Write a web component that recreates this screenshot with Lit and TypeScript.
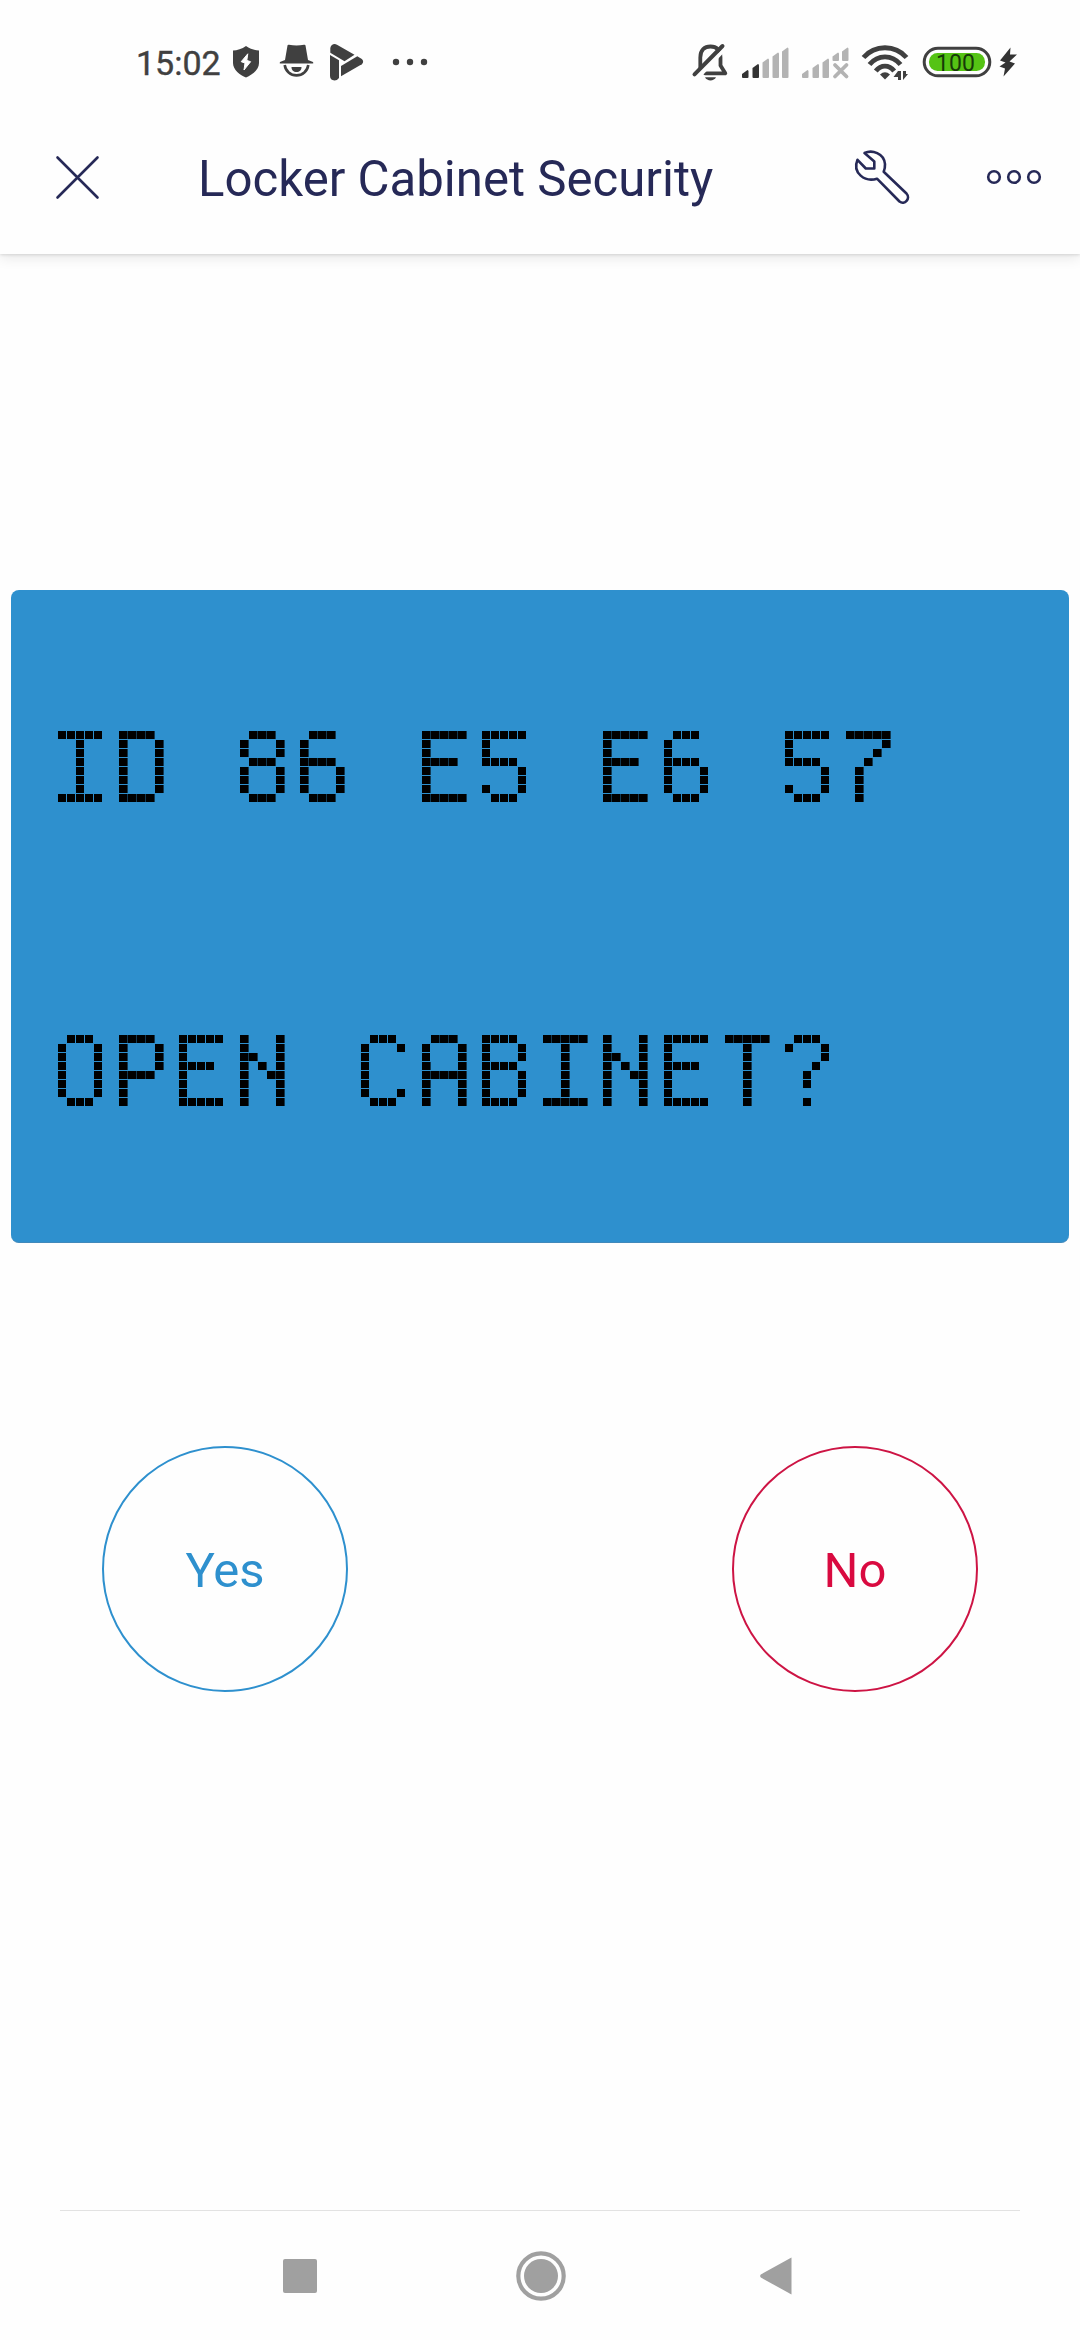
import { LitElement, html, svg, css } from "lit";
import { customElement, property } from "lit/decorators.js";

/**
 * How a character is fitted to the 5x8 dot cell: font, scale and baseline origin,
 * outline weight, and single dots [row, column] switched on or off afterwards.
 */
interface Fit {
  font: string;
  weight?: string;
  sx: number;
  sy: number;
  tx: number;
  ty: number;
  stroke?: number;
  on?: number[][];
  off?: number[][];
}

const DEJAVU = "DejaVu Sans Mono";
const LIBERATION = "Liberation Mono";

const FITS: Record<string, Fit> = {
  "5": { font: LIBERATION, sx: 0.979, sy: 1, tx: -6.9, ty: 69 },
  "6": { font: "Open Sans", sx: 0.979, sy: 1, tx: -7.9, ty: 72 },
  "7": { font: "Liberation Sans", sx: 1.348, sy: 0.971, tx: -18.7, ty: 67, off: [[4, 2]] },
  "8": { font: DEJAVU, sx: 0.979, sy: 0.934, tx: -6.9, ty: 69 },
  I: { font: DEJAVU, sx: 0.905, sy: 0.932, tx: -4.1, ty: 70, stroke: 3 },
  D: { font: DEJAVU, sx: 0.979, sy: 1.014, tx: -4.9, ty: 73 },
  E: { font: LIBERATION, sx: 0.917, sy: 1.03, tx: -6.4, ty: 69 },
  O: { font: DEJAVU, sx: 0.94, sy: 0.974, tx: -5.7, ty: 72 },
  P: { font: DEJAVU, sx: 0.936, sy: 1, tx: -6.4, ty: 74 },
  N: { font: "Roboto", sx: 0.909, sy: 1.028, tx: -9.3, ty: 69, off: [[1, 1], [5, 3]] },
  C: { font: LIBERATION, sx: 0.922, sy: 1.088, tx: -6.6, ty: 71.9 },
  A: {
    font: LIBERATION,
    weight: "bold",
    sx: 1.016,
    sy: 1.258,
    tx: -6,
    ty: 68,
    on: [[1, 0], [2, 0]],
    off: [[1, 1], [1, 3], [2, 1], [2, 3], [3, 1]],
  },
  B: { font: DEJAVU, sx: 0.917, sy: 0.932, tx: -4.3, ty: 70 },
  T: { font: DEJAVU, sx: 0.679, sy: 0.878, tx: 2.6, ty: 68, stroke: 3 },
  "?": { font: DEJAVU, sx: 1.1, sy: 0.959, tx: -10.1, ty: 73 },
};
const PLAIN: Fit = { font: DEJAVU, sx: 0.94, sy: 0.974, tx: -5.7, ty: 72 };

/** One line of the LCD. Each character is rasterised onto its dot cell by an SVG filter. */
@customElement("lcd-line")
export class LcdLine extends LitElement {
  @property() text = "";

  static styles = css`
    :host {
      display: block;
    }
    svg {
      display: block;
      overflow: visible;
    }
    text {
      font-size: 100px;
      fill: #000;
      stroke: #000;
      stroke-linejoin: round;
    }
    .on {
      fill: #000;
    }
    .off {
      fill: #2e90ce;
    }
  `;

  private filter(id: string, gap: number) {
    return svg`
      <filter id=${id} filterUnits="userSpaceOnUse" primitiveUnits="userSpaceOnUse" color-interpolation-filters="sRGB" x="0" y="0" width="45" height="72">
        <feFlood x="4" y="4" width="1" height="1" flood-color="#000" result="p" />
        <feComposite in="p" in2="p" operator="over" x="0" y="0" width="9" height="9" result="pc" />
        <feTile in="pc" x="0" y="0" width="45" height="72" result="points" />
        <feFlood x="0" y="0" width="8" height="8" flood-color="#000" result="s" />
        <feFlood x="8" y="0" width="1" height="8" flood-color="#000" flood-opacity=${gap} result="g" />
        <feComposite in="s" in2="g" operator="over" x="0" y="0" width="9" height="9" result="sc" />
        <feTile in="sc" x="0" y="0" width="45" height="72" result="squares" />
        <feComposite in="SourceAlpha" in2="points" operator="in" />
        <feComponentTransfer><feFuncA type="linear" slope="20" intercept="-8" /></feComponentTransfer>
        <feMorphology operator="dilate" radius="4" result="blocks" />
        <feComposite in="blocks" in2="squares" operator="in" />
      </filter>`;
  }

  private glyph(c: string, i: number) {
    if (c === " ") return svg`<text x=${60.6 * i} y="70"> </text>`;
    const f = FITS[c] ?? PLAIN;
    const x = 58 + 60.6 * i;
    const frac = x - Math.floor(x);
    const dot = (cls: string) => ([r, k]: number[]) =>
      svg`<rect class=${cls} x=${k * 9} y=${r * 9} width=${cls === "on" ? 8 : 9} height="8" />`;
    return svg`
      <g transform="translate(${Math.round(x) - 58} 0)">
        <g filter="url(#${frac > 0.3 ? "dense" : "dots"})">
          <text
            transform="matrix(${f.sx} 0 0 ${f.sy} ${f.tx} ${f.ty})"
            font-family=${`${f.font}, monospace`}
            font-weight=${f.weight ?? "normal"}
            stroke-width=${f.stroke ?? 0}
          >${c}</text>
        </g>
        ${(f.off ?? []).map(dot("off"))}
        ${(f.on ?? []).map(dot("on"))}
      </g>`;
  }

  render() {
    return html`
      <svg width="970" height="72" viewBox="0 0 970 72">
        <defs>${this.filter("dots", 0)}${this.filter("dense", 0.6)}</defs>
        ${[...this.text].map((c, i) => this.glyph(c, i))}
      </svg>
    `;
  }
}

const shield = svg`<path d="M14 0 C18 3 23 4.300 27 4.600 V17 C27 24 20 29 14 31.500 C8 29 1 24 1 17 V4.600 C5 4.300 10 3 14 0Z" fill="#404040"/><path d="M15.800 7.800 L9.200 15.700 L13 17 L12 24 L18.600 15.700 L14.800 14.400Z" fill="#fff" stroke="#fff" stroke-width="1" stroke-linejoin="round"/>`;
const incognito = svg`<path d="M8 1 Q8.200 0 9.500 .300 Q17 1.600 24.500 .300 Q25.800 0 26 1 L28.500 15.500 L33.500 17.500 Q34.500 19 33 19 H1 Q-.500 19 .500 17.500 L5.500 15.500Z" fill="#404040"/><path d="M5.200 20.500 A11.900 11.900 0 0 0 28.800 20.500" fill="none" stroke="#404040" stroke-width="2.600"/><path d="M12 22.500 H22 C22 26 20 27.500 17 27.500 C14 27.500 12 26 12 22.500Z" fill="#404040"/>`;
const play = svg`<g fill="#404040"><path d="M.300 4 C1 .300 4.500 -.800 7 .800 L24.500 10.800 L14.500 17.300 L.300 8.800Z"/><path d="M0 11 L9 16.300 V34 Q7 36.500 4.500 36.500 Q0 36 0 32Z"/><path d="M11 22 L27.300 12.300 L31.800 15 Q34.500 17.700 31.800 20.300 L11 32.300Z"/></g>`;
const bellOff = svg`<path d="M7.800 24 V14 C7.800 6.500 12 3 18 3 C24 3 28 6.500 28 14 V22 L32.800 29.800 H12.500" fill="none" stroke="#404040" stroke-width="3.800" stroke-linejoin="round" stroke-linecap="round"/><path d="M5.500 34 L33 4.500" stroke="#fefefe" stroke-width="4"/><path d="M2 30.800 L30 2.500" stroke="#404040" stroke-width="4" stroke-linecap="round"/><path d="M12.500 33.800 H23.500 C21.500 38 14.500 38 12.500 33.800Z" fill="#404040"/>`;
const bar = (x: number, y: number, bottom: number, color: string) =>
  svg`<path d="M${x} ${y + 4} L${x + 5.5} ${y} Q${x + 6.5} ${y} ${x + 6.5} ${y + 1.5} V${bottom - 1} Q${x + 6.5} ${bottom} ${x + 5.5} ${bottom} H${x + 1} Q${x} ${bottom} ${x} ${bottom - 1}Z" fill="${color}"/>`;

@customElement("app-root")
export class AppRoot extends LitElement {
  static styles = css`
    :host {
      display: flex;
      flex-direction: column;
      width: 1080px;
      height: 2340px;
      background: #fefefe;
      font-family: Roboto, sans-serif;
      overflow: hidden;
    }
    svg {
      display: block;
      flex: none;
      overflow: visible;
    }
    .top {
      flex: none;
      height: 254px;
      background: #fefefe;
      box-shadow: 0 1px 3px rgba(0, 0, 0, 0.12), 0 4px 13px rgba(0, 0, 0, 0.09);
    }
    .status {
      display: flex;
      justify-content: space-between;
      height: 100px;
      padding: 0 61px 0 136px;
      box-sizing: border-box;
      color: #404040;
    }
    .side {
      display: flex;
      align-items: flex-start;
    }
    .time {
      font-size: 34px;
      line-height: 40px;
      margin-top: 43px;
      width: 95px;
      -webkit-text-stroke: 0.4px #404040;
    }
    .header {
      display: flex;
      align-items: center;
      height: 154px;
      padding: 0 38px 0 56px;
      box-sizing: border-box;
    }
    .title {
      flex: 1;
      margin: 3px 0 0 99px;
      font-size: 49.15px;
      font-weight: 400;
      line-height: 60px;
      color: #262957;
      white-space: nowrap;
    }
    .line {
      fill: none;
      stroke: #262957;
      stroke-width: 2.6px;
      stroke-linecap: round;
      stroke-linejoin: round;
    }
    .wrench {
      margin-right: 77px;
    }
    .lcd {
      flex: none;
      margin: 336px 11px 0;
      height: 653px;
      box-sizing: border-box;
      padding: 141px 0 0 47px;
      display: flex;
      flex-direction: column;
      gap: 232px;
      border-radius: 8px;
      background: #2e90ce;
      border-bottom: 1px solid #4189bb;
    }
    .actions {
      display: flex;
      justify-content: space-between;
      margin: 203px 102px 0;
    }
    button {
      width: 246px;
      height: 246px;
      padding: 4px 0 0;
      border: 2px solid;
      border-radius: 50%;
      background: transparent;
      font: 400 49px/60px Roboto, sans-serif;
    }
    .yes {
      color: #2e90ce;
    }
    .no {
      color: #d90a40;
      border-color: #cd1444;
    }
    .nav {
      margin: auto 60px 0;
      height: 130px;
      box-sizing: border-box;
      border-top: 1px solid #e2e2e2;
      display: flex;
      align-items: center;
      justify-content: space-between;
      padding: 0 228px 0 223px;
    }
    .home {
      margin-left: 4px;
    }
  `;

  render() {
    const g = "#b3b3b3";
    return html`
      <div class="top">
        <div class="status">
          <div class="side">
            <span class="time">15:02</span>
            <svg width="305" height="100" viewBox="231 0 305 100">
              <g transform="translate(232 46)">${shield}</g>
              <g transform="translate(279.500 44.500)">${incognito}</g>
              <g transform="translate(330 44)">${play}</g>
              <circle cx="396" cy="62" r="3.200" fill="#404040" />
              <circle cx="410" cy="62" r="3.200" fill="#404040" />
              <circle cx="424" cy="62" r="3.200" fill="#404040" />
            </svg>
          </div>
          <div class="side">
            <svg width="327" height="100" viewBox="692 0 327 100">
              <g transform="translate(692.500 43.500)">${bellOff}</g>
              ${bar(742, 70, 78, "#333")} ${bar(752.5, 64, 78, "#333")} ${bar(762.5, 58.5, 78, g)}
              ${bar(772.5, 52.5, 78, g)} ${bar(782, 47.5, 78, g)}
              ${bar(802, 70, 78, g)} ${bar(812.5, 64, 78, g)} ${bar(822.5, 58.5, 78, g)}
              ${bar(832.5, 52.5, 61, g)} ${bar(842, 47.5, 61, g)}
              <path d="M835 65 L846.500 76.500 M846.500 65 L835 76.500" stroke="${g}" stroke-width="3.800" stroke-linecap="round" />
              <g fill="none" stroke="#404040" stroke-width="4.900">
                <path d="M863.500 57.500 C875 44.500 895 44.500 906.500 57.500" />
                <path d="M869.500 64.500 C878 54.300 892 54.300 900.500 64.500" />
                <path d="M875.800 71 C881 64.500 889 64.500 894.200 71" />
              </g>
              <path d="M880 74.500 Q885 70 890 74.500 L885 79.500Z" fill="#404040" />
              <path d="M898 71 H901 V80 H898 V77 H893.500Z M903 71 H906 V74 H908 L903 80Z" fill="#404040" />
              <rect x="924.200" y="48.200" width="65.600" height="27.600" rx="13.800" fill="none" stroke="#404040" stroke-width="3" />
              <rect x="929" y="53" width="56" height="18" rx="8.500" fill="#55c314" />
              <text x="955.500" y="71" text-anchor="middle" font-family="Roboto" font-size="23" fill="#173b08">100</text>
              <path d="M1010.500 47.500 L1000 60.500 L1005.500 62.500 L999.500 66.500 L1005 68.500 L1003.500 76.500 L1015 63.500 L1009.500 61.500 L1017 54.500 L1010 54.500Z" fill="#333" />
            </svg>
          </div>
        </div>
        <div class="header">
          <svg width="43" height="43" viewBox="56 156 43 43">
            <path class="line" d="M57.500 157.500 L97.500 197.500 M97.500 157.500 L57.500 197.500" />
          </svg>
          <h1 class="title">Locker Cabinet Security</h1>
          <svg class="wrench" width="55" height="54" viewBox="855 150 55 54">
            <path
              class="line"
              d="M864.500 153 C872 149.500 884 153 885 164 Q885.200 168 883.700 171.700 L906.500 193.500 C911 198.500 904.500 205.500 899.500 201.500 L877 178.700 C865 182.500 852 173 857.500 159.800 L865.800 168.500 H874.300 V161.500 Z"
            />
          </svg>
          <svg width="55" height="16" viewBox="987 169 55 16">
            <g class="line"><circle cx="994" cy="177" r="5.800" /><circle cx="1014" cy="177" r="5.800" /><circle cx="1034" cy="177" r="5.800" /></g>
          </svg>
        </div>
      </div>
      <section class="lcd">
        <lcd-line text="ID 86 E5 E6 57"></lcd-line>
        <lcd-line text="OPEN CABINET?"></lcd-line>
      </section>
      <div class="actions">
        <button class="yes">Yes</button>
        <button class="no">No</button>
      </div>
      <div class="nav">
        <svg width="34" height="34"><rect width="34" height="34" rx="2" fill="#a0a0a0" /></svg>
        <svg class="home" width="50" height="50">
          <circle cx="25" cy="25" r="22.700" fill="none" stroke="#a0a0a0" stroke-width="4.200" />
          <circle cx="25" cy="25" r="17" fill="#a0a0a0" />
        </svg>
        <svg width="32" height="38"><path d="M31.500 .500 V37.500 L.800 20.500 Q-.500 19 .800 17.500Z" fill="#a0a0a0" /></svg>
      </div>
    `;
  }
}
